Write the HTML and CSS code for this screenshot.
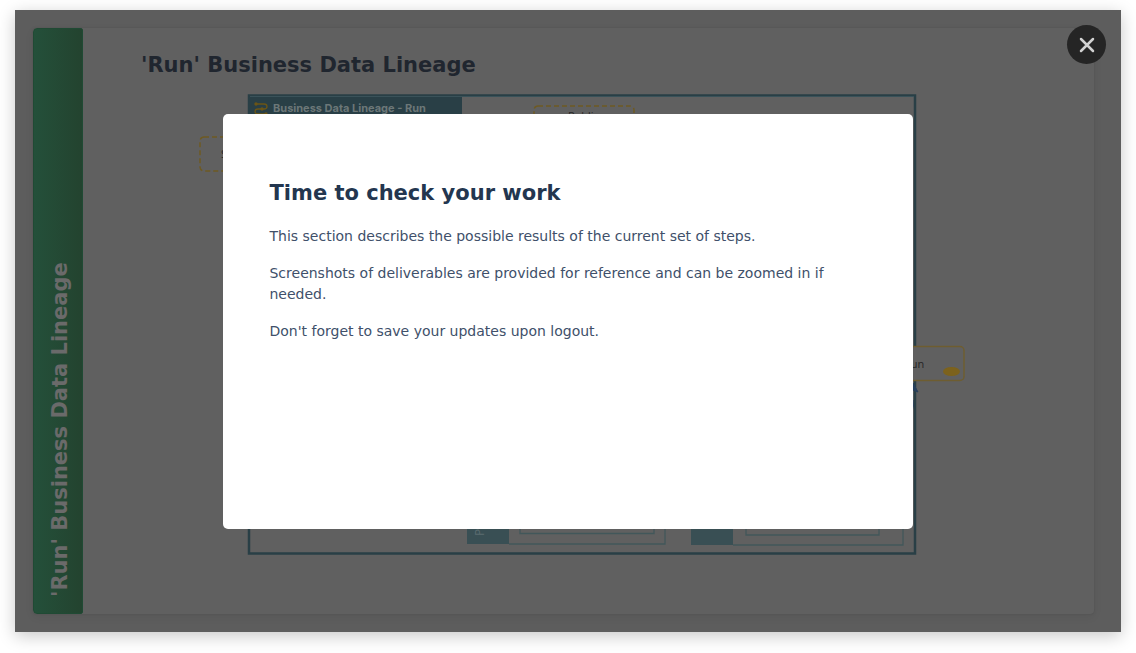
FILE: index.html
```html
<!DOCTYPE html>
<html lang="en">
<head>
<meta charset="utf-8">
<meta name="viewport" content="width=device-width, initial-scale=1">
<title>'Run' Business Data Lineage</title>
<link rel="stylesheet" href="styles.css">
</head>
<body>
<main class="stage">
  <section class="card">
    <div class="rail"><span class="rail-label">'Run' Business Data Lineage</span></div>
    <div class="content">
      <h1 class="page-title">'Run' Business Data Lineage</h1>
      <svg class="diagram" viewBox="0 0 766 461" role="img" aria-label="Business data lineage diagram">
        <rect x="50" y="1.500" width="666" height="458" fill="none" stroke="#293f46" stroke-width="2.500"/>
        <rect x="49" y="3" width="214" height="24" fill="#293f46"/>
        <path d="M51 2.500H715" stroke="#3a5259" stroke-width="1"/>
        <g fill="none" stroke="#6b5516" stroke-width="1.300">
          <path d="M57 10h8q3 0 3 2.500t-3 2.500h-6q-3 0-3 2.500t3 2.500h8"/>
        </g>
        <g fill="#6b5516"><circle cx="57" cy="10" r="1.700"/><circle cx="63" cy="15" r="1.700"/><circle cx="67" cy="20" r="1.700"/></g>
        <text class="diagram-title" x="74" y="18">Business Data Lineage - Run</text>
        <rect x="1" y="43" width="100" height="34" rx="4" fill="none" stroke="#6e5a22" stroke-width="1.500" stroke-dasharray="5 3"/>
        <text class="node-label" x="22" y="64">S</text>
        <rect x="335" y="12" width="100" height="34" rx="4" fill="none" stroke="#6e5a22" stroke-width="1.500" stroke-dasharray="5 3"/>
        <text class="node-label" x="369" y="26">Public</text>
        <rect x="665" y="252.500" width="100" height="34" rx="4" fill="#606060" stroke="#6e5d30" stroke-width="1.500"/>
        <text class="node-label" x="705" y="274">Run</text>
        <ellipse cx="752.500" cy="277.500" rx="8.500" ry="4.500" fill="#7c621d"/>
        <path d="M714 289l5 9-5-2zM714 306q1 6-1 12" fill="#273f5c" stroke="#273f5c"/>
        <rect x="268" y="400" width="42" height="50" fill="#394f54"/>
        <path d="M310 450h156v-50M321 400v39.500h134V400" fill="none" stroke="#42575a" stroke-width="1.300"/>
        <text class="node-side" transform="translate(285 442) rotate(-90)">P</text>
        <rect x="492" y="400" width="42" height="51" fill="#394f54"/>
        <path d="M534 451h170v-50M547 400v41h133V400" fill="none" stroke="#42575a" stroke-width="1.300"/>
      </svg>
    </div>
  </section>
  <button class="close" type="button" aria-label="Close">
    <svg class="close-icon" viewBox="0 0 16 16" aria-hidden="true"><path d="M2 2l12 12M14 2L2 14" fill="none" stroke="#d2d2d2" stroke-width="2.500" stroke-linecap="round"/></svg>
  </button>
  <div class="modal" role="dialog" aria-modal="true" aria-labelledby="modal-title">
    <h2 class="modal-title" id="modal-title">Time to check your work</h2>
    <p>This section describes the possible results of the current set of steps.</p>
    <p>Screenshots of deliverables are provided for reference and can be zoomed in if needed.</p>
    <p>Don't forget to save your updates upon logout.</p>
  </div>
</main>
</body>
</html>
```
FILE: styles.css
```css
* { box-sizing: border-box; }
body {
  margin: 0;
  padding: 10px 15px 21px;
  background: #fff;
  font-family: Verdana, "DejaVu Sans", sans-serif;
}
.stage {
  position: relative;
  display: flex;
  min-height: calc(100vh - 31px);
  padding: 18px 27px 18px 18px;
  background: #5d5d5d;
  box-shadow: 0 4px 16px rgba(0, 0, 0, 0.22);
}
.card {
  display: flex;
  flex: 1;
  border-radius: 4px;
  background: #606060;
  box-shadow: 0 0 2px #505050, 0 3px 10px rgba(0, 0, 0, 0.06);
}
.rail {
  display: flex;
  justify-content: center;
  width: 50px;
  padding: 0 0 16px 4px;
  border: 1px solid #204a34;
  border-radius: 4px 2px 2px 4px;
  background: linear-gradient(90deg, #24503a, #23432f);
}
.rail-label {
  writing-mode: vertical-rl;
  transform: rotate(180deg);
  color: #6a6a6a;
  font-size: 21px;
  font-weight: 700;
  line-height: 24px;
  white-space: nowrap;
}
.content {
  flex: 1;
  padding: 25px 129px 24px 58px;
}
.page-title {
  margin: 0 0 17px;
  color: #20262f;
  font-size: 21px;
  line-height: 24px;
}
.diagram {
  display: block;
  width: calc(100% - 58px);
  margin-left: 58px;
}
.diagram-title { font: 700 11px Inter, sans-serif; fill: #6c7778; }
.node-label { font: 11px "Open Sans", sans-serif; fill: #272727; }
.node-side { font: 12px "Open Sans", sans-serif; fill: #5b6c70; }
.close {
  position: absolute;
  top: 15px;
  right: 15px;
  display: grid;
  place-items: center;
  width: 39px;
  height: 39px;
  padding: 0;
  border: 0;
  border-radius: 50%;
  background: #252525;
}
.close-icon { width: 16px; height: 16px; }
.modal {
  position: absolute;
  inset: 0;
  width: 62.3%;
  height: 415px;
  margin: auto;
  padding: 66px 80px 40px 46px;
  border-radius: 5px;
  background: #fff;
  color: #40506a;
}
.modal-title {
  margin: 0 0 20px;
  color: #23364f;
  font-size: 21px;
  line-height: 26px;
}
.modal p {
  margin: 0 0 16px;
  font-size: 14px;
  line-height: 21px;
}
```
